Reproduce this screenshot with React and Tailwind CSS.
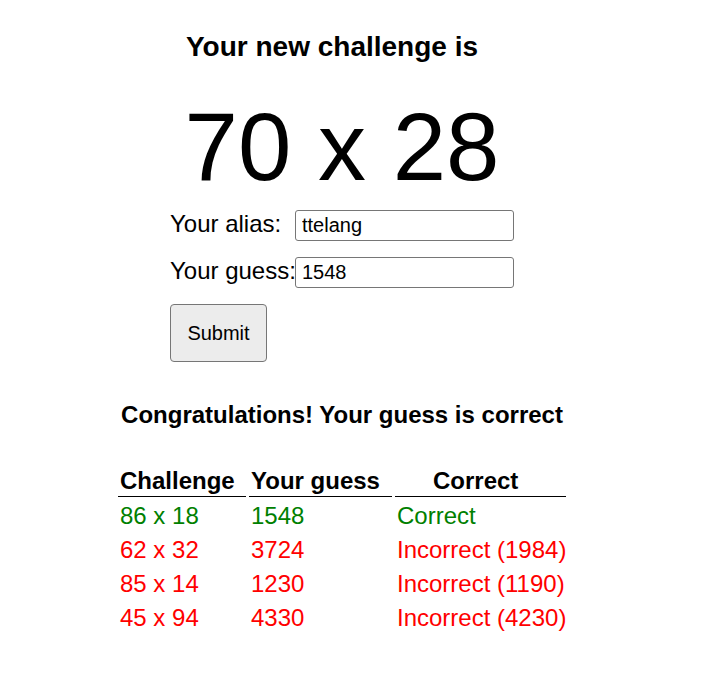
import React from "react";

const ATTEMPTS = [
  { challenge: "86 x 18", guess: "1548", result: "Correct", ok: true },
  { challenge: "62 x 32", guess: "3724", result: "Incorrect (1984)", ok: false },
  { challenge: "85 x 14", guess: "1230", result: "Incorrect (1190)", ok: false },
  { challenge: "45 x 94", guess: "4330", result: "Incorrect (4230)", ok: false },
];

export default function App() {
  const input = "w-[219px] h-[31px] shrink-0 border border-[#767676] rounded-[3px] px-[6px] text-[20px] leading-[24px] text-black outline-none";
  const label = "w-[125px] shrink-0 whitespace-nowrap text-[24px] leading-[28px] pb-[3px]";

  return (
    <div className="w-full h-[695px] bg-white text-black font-['Liberation_Sans',Arial,sans-serif]">
      <div className="ml-[118px] w-[448px] pt-[31px]">
        <h3 className="ml-[68px] text-[28px] leading-[32px] font-bold">Your new challenge is</h3>
        <h1 className="mt-[29px] text-[96px] leading-[110px] text-center">70 x 28</h1>

        {/* Form */}
        <div className="ml-[52px] mt-[8px] flex flex-col gap-[16px]">
          <div className="flex items-center h-[31px]">
            <label className={label}>Your alias:</label>
            <input className={input} defaultValue="ttelang" />
          </div>
          <div className="flex items-center h-[31px]">
            <label className={label}>Your guess:</label>
            <input className={input} defaultValue="1548" />
          </div>
          <div>
            <button className="w-[97px] h-[58px] bg-[#ececec] border border-[#767676] rounded-[4px] text-[20px] leading-[24px] text-black">
              Submit
            </button>
          </div>
        </div>

        <h4 className="mt-[39px] text-[24px] leading-[28px] font-bold text-center">
          Congratulations! Your guess is correct
        </h4>

        {/* Attempts */}
        <div className="mt-[38px] grid grid-cols-[128px_143px_171px] gap-x-[3px]">
          <div className="pl-[2px] text-[24px] leading-[28px] font-bold pb-[1px] border-b border-black">Challenge</div>
          <div className="pl-[2px] text-[24px] leading-[28px] font-bold pb-[1px] border-b border-black">Your guess</div>
          <div className="pl-[38px] text-[24px] leading-[28px] font-bold pb-[1px] border-b border-black">Correct</div>
          <div className="col-span-3 h-[2px]" />
          {ATTEMPTS.map((a, i) => {
            const color = a.ok ? "text-[#008000]" : "text-[#ff0000]";
            return (
              <React.Fragment key={i}>
                <div className={`pl-[2px] text-[24px] leading-[34px] ${color}`}>{a.challenge}</div>
                <div className={`pl-[2px] text-[24px] leading-[34px] ${color}`}>{a.guess}</div>
                <div className={`pl-[2px] text-[24px] leading-[34px] whitespace-nowrap ${color}`}>{a.result}</div>
              </React.Fragment>
            );
          })}
        </div>
      </div>
    </div>
  );
}
